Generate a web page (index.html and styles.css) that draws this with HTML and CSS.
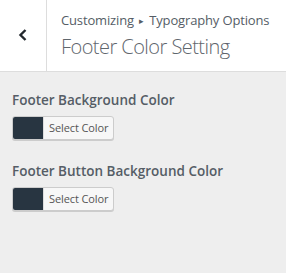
FILE: index.html
```html
<!DOCTYPE html>
<html lang="en">
<head>
    <meta charset="utf-8" />
    <title>Footer Color Setting</title>
    <link rel="stylesheet" href="styles.css">
</head>
<body>
    <div class="panel-header">
        <button class="back-button" aria-label="Back">
            <svg width="10" height="12" viewBox="0 0 10 12">
                <path d="M7.5 1 L2.5 6 L7.5 11" fill="none" stroke="#23282d" stroke-width="2.4" />
            </svg>
        </button>
        <div class="panel-title">
            <div class="breadcrumb">Customizing <span class="sep">&#9656;</span> Typography Options</div>
            <h1>Footer Color Setting</h1>
        </div>
    </div>

    <div class="controls">
        <div class="control">
            <label class="control-label">Footer Background Color</label>
            <button class="color-picker">
                <span class="swatch"></span>
                <span class="picker-text">Select Color</span>
            </button>
        </div>

        <div class="control">
            <label class="control-label">Footer Button Background Color</label>
            <button class="color-picker">
                <span class="swatch"></span>
                <span class="picker-text">Select Color</span>
            </button>
        </div>
    </div>
</body>
</html>
```

FILE: styles.css
```css
body {
    font-family: 'Open Sans', 'Noto Sans', sans-serif;
    margin: 0;
    padding: 0;
    background-color: #eeeeee;
    color: #555d66;
    min-height: 100vh;
}

.panel-header {
    display: flex;
    height: 71px;
    background: #fff;
    border-bottom: 1px solid #ddd;
}

.back-button {
    width: 47px;
    border: none;
    border-right: 1px solid #ddd;
    background: #fff;
    padding: 0 0 2px;
    display: flex;
    align-items: center;
    justify-content: center;
    cursor: pointer;
}

.panel-title {
    padding: 11px 0 0 14px;
}

.breadcrumb {
    font-size: 13px;
    line-height: 18px;
    color: #555d66;
    letter-spacing: -0.15px;
    white-space: nowrap;
}

.breadcrumb .sep {
    font-size: 9px;
    vertical-align: 1px;
    margin: 0 2px;
}

.panel-title h1 {
    margin: 4px 0 0;
    font-size: 20px;
    line-height: 26px;
    font-weight: 300;
    color: #5f666d;
    letter-spacing: -0.55px;
}

.controls {
    padding: 19px 12px;
}

.control {
    margin-bottom: 22px;
}

.control-label {
    display: block;
    font-size: 13.5px;
    font-weight: 600;
    line-height: 19px;
    color: #555d66;
    margin-bottom: 6px;
}

.color-picker {
    display: flex;
    height: 24px;
    padding: 0;
    border: 1px solid #ccc;
    border-radius: 3px;
    background: #f7f7f7;
    box-shadow: 0 1px 0 #ccc;
    overflow: hidden;
    font-family: inherit;
    cursor: pointer;
}

.swatch {
    width: 30px;
    height: 100%;
    background: #283541;
}

.picker-text {
    padding: 0 5px;
    font-size: 11px;
    line-height: 22px;
    color: #555;
    border-left: 1px solid #ddd;
    letter-spacing: -0.1px;
}
```
